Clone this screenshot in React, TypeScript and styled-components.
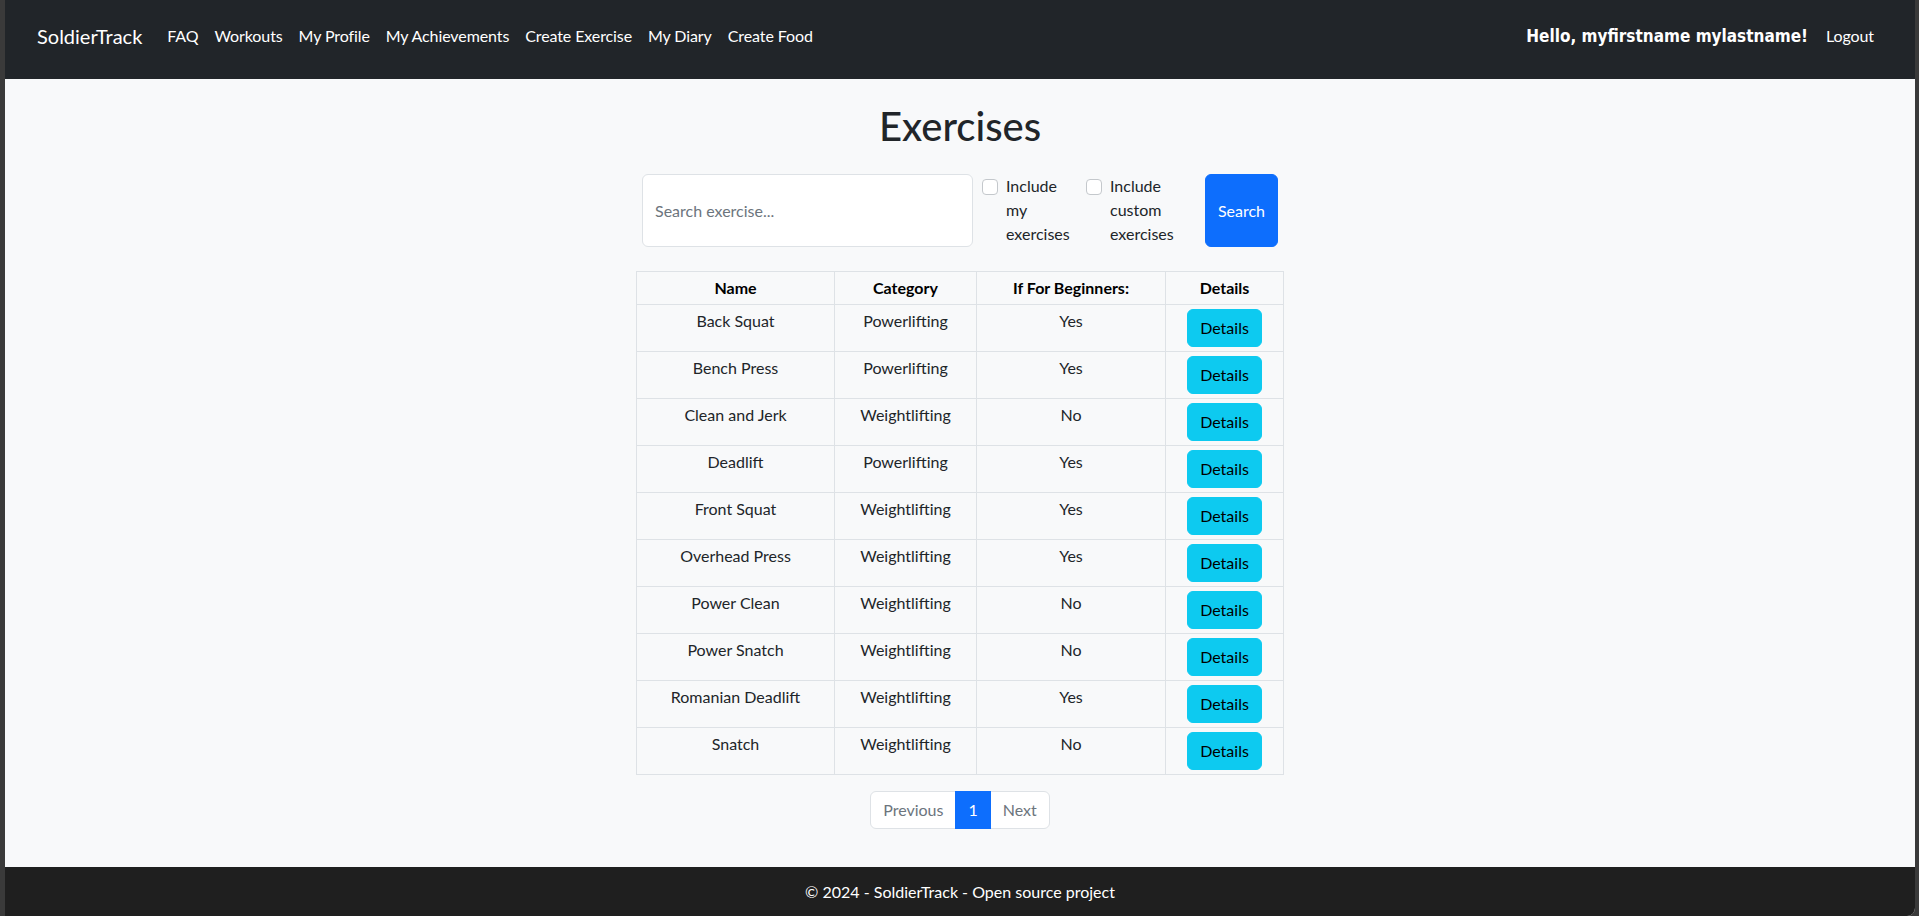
import { FC } from 'react';
import styled, { createGlobalStyle } from 'styled-components';

const GlobalStyle = createGlobalStyle`
  html, body {
    margin: 0;
    padding: 0;
    background: #3a3a3a;
  }
  body {
    font-family: Lato, "Open Sans", sans-serif;
    font-size: 16px;
    line-height: 1.5;
    color: #212529;
  }
  * {
    box-sizing: border-box;
  }
`;

const Window = styled.div`
  margin: 0 4px 0 5px;
  height: 100vh;
  display: flex;
  flex-direction: column;
  background: #f8f9fa;
  border-bottom-right-radius: 8px;
  overflow: hidden;
`;

const NavBar = styled.nav`
  height: 79px;
  flex-shrink: 0;
  background: #212529;
  display: flex;
  align-items: flex-start;
  padding: 20px 33px 0 32px;
`;

const Brand = styled.a`
  font-size: 20px;
  line-height: 32px;
  color: #fff;
  text-decoration: none;
  margin-right: 17px;
`;

const NavList = styled.ul`
  display: flex;
  list-style: none;
  margin: 0;
  padding: 0;
  flex: 1;
`;

const NavLink = styled.a`
  display: block;
  padding: 4px 8px;
  font-size: 16px;
  line-height: 24px;
  letter-spacing: -0.1px;
  color: #fff;
  text-decoration: none;
`;

const Greeting = styled.span`
  font-family: "DejaVu Sans Condensed", "DejaVu Sans", sans-serif;
  font-weight: bold;
  font-size: 17px;
  line-height: 32px;
  color: #fff;
  margin-right: 10px;
`;

const Main = styled.main`
  flex: 1;
  display: flex;
  flex-direction: column;
  align-items: center;
  padding-top: 23px;
`;

const Title = styled.h1`
  margin: 0 0 24px;
  font-size: 40px;
  line-height: 48px;
  font-weight: 500;
  color: #212529;
`;

const SearchForm = styled.form`
  display: flex;
  align-items: flex-start;
  margin-bottom: 24px;
`;

const SearchInput = styled.input`
  width: 331px;
  height: 73px;
  padding: 6px 12px;
  font-family: inherit;
  font-size: 16px;
  color: #212529;
  background: #fff;
  border: 1px solid #dee2e6;
  border-radius: 6px;
  outline: none;

  &::placeholder {
    color: #6c757d;
  }
`;

const CheckItem = styled.label<{ gap: number }>`
  display: flex;
  align-items: flex-start;
  margin-left: 9px;
  margin-right: ${({ gap }) => gap}px;
`;

const CheckBox = styled.input`
  appearance: none;
  width: 16px;
  height: 16px;
  margin: 5px 8px 0 0;
  flex-shrink: 0;
  background: #fff;
  border: 1px solid #c4c8cc;
  border-radius: 4px;
`;

const CheckText = styled.span`
  width: 68px;
  font-size: 16px;
  line-height: 24px;
  color: #212529;
`;

const SearchButton = styled.button`
  width: 73px;
  height: 73px;
  padding: 0;
  font-family: inherit;
  font-size: 16px;
  color: #fff;
  background: #0d6efd;
  border: 1px solid #0d6efd;
  border-radius: 6px;
`;

const Table = styled.table`
  width: 648px;
  border-collapse: collapse;
  margin-bottom: 16px;
`;

const HeadCell = styled.th<{ w: number }>`
  width: ${({ w }) => w}px;
  padding: 4px;
  font-weight: bold;
  line-height: 24px;
  color: #000;
  text-align: center;
  vertical-align: top;
  border: 1px solid #dee2e6;
`;

const Cell = styled.td`
  padding: 4px;
  line-height: 24px;
  text-align: center;
  vertical-align: top;
  border: 1px solid #dee2e6;
`;

const DetailsButton = styled.button`
  height: 38px;
  padding: 6px 12px;
  font-family: inherit;
  font-size: 16px;
  line-height: 24px;
  color: #000;
  background: #0dcaf0;
  border: 1px solid #0dcaf0;
  border-radius: 6px;
`;

const Pagination = styled.ul`
  display: flex;
  list-style: none;
  margin: 0;
  padding: 0;
`;

const PageLink = styled.a<{ active?: boolean; disabled?: boolean; edge?: 'left' | 'right' }>`
  display: block;
  padding: 6px 12px;
  margin-left: ${({ edge }) => (edge === 'left' ? 0 : -1)}px;
  font-size: 16px;
  line-height: 24px;
  text-decoration: none;
  color: ${({ active, disabled }) => (active ? '#fff' : disabled ? '#6c757d' : '#0d6efd')};
  background: ${({ active }) => (active ? '#0d6efd' : '#fff')};
  border: 1px solid ${({ active }) => (active ? '#0d6efd' : '#dee2e6')};
  position: relative;
  z-index: ${({ active }) => (active ? 1 : 0)};
  border-radius: ${({ edge }) => (edge === 'left' ? '6px 0 0 6px' : edge === 'right' ? '0 6px 6px 0' : '0')};
`;

const Footer = styled.footer`
  height: 49px;
  flex-shrink: 0;
  display: flex;
  align-items: center;
  justify-content: center;
  background: #1f1f1f;
  color: #fff;
  font-size: 16px;
`;

type TExercise = {
  name: string,
  category: string,
  beginner: boolean,
};

const exercises: TExercise[] = [
  { name: 'Back Squat', category: 'Powerlifting', beginner: true },
  { name: 'Bench Press', category: 'Powerlifting', beginner: true },
  { name: 'Clean and Jerk', category: 'Weightlifting', beginner: false },
  { name: 'Deadlift', category: 'Powerlifting', beginner: true },
  { name: 'Front Squat', category: 'Weightlifting', beginner: true },
  { name: 'Overhead Press', category: 'Weightlifting', beginner: true },
  { name: 'Power Clean', category: 'Weightlifting', beginner: false },
  { name: 'Power Snatch', category: 'Weightlifting', beginner: false },
  { name: 'Romanian Deadlift', category: 'Weightlifting', beginner: true },
  { name: 'Snatch', category: 'Weightlifting', beginner: false },
];

const navItems = ['FAQ', 'Workouts', 'My Profile', 'My Achievements', 'Create Exercise', 'My Diary', 'Create Food'];

const App: FC = () => (
  <>
    <GlobalStyle />
    <Window>
      <NavBar>
        <Brand href='#'>SoldierTrack</Brand>
        <NavList>
          {navItems.map((item) => (
            <li key={item}><NavLink href='#'>{item}</NavLink></li>
          ))}
        </NavList>
        <Greeting>Hello, myfirstname mylastname!</Greeting>
        <NavLink href='#'>Logout</NavLink>
      </NavBar>
      <Main>
        <Title>Exercises</Title>
        <SearchForm onSubmit={(e) => e.preventDefault()}>
          <SearchInput placeholder='Search exercise...' />
          <CheckItem gap={3}>
            <CheckBox type='checkbox' />
            <CheckText>Include my exercises</CheckText>
          </CheckItem>
          <CheckItem gap={27}>
            <CheckBox type='checkbox' />
            <CheckText>Include custom exercises</CheckText>
          </CheckItem>
          <SearchButton type='submit'>Search</SearchButton>
        </SearchForm>
        <Table>
          <thead>
            <tr>
              <HeadCell w={198}>Name</HeadCell>
              <HeadCell w={142}>Category</HeadCell>
              <HeadCell w={189}>If For Beginners:</HeadCell>
              <HeadCell w={118}>Details</HeadCell>
            </tr>
          </thead>
          <tbody>
            {exercises.map((ex) => (
              <tr key={ex.name}>
                <Cell>{ex.name}</Cell>
                <Cell>{ex.category}</Cell>
                <Cell>{ex.beginner ? 'Yes' : 'No'}</Cell>
                <Cell><DetailsButton>Details</DetailsButton></Cell>
              </tr>
            ))}
          </tbody>
        </Table>
        <Pagination>
          <li><PageLink href='#' disabled edge='left'>Previous</PageLink></li>
          <li><PageLink href='#' active>1</PageLink></li>
          <li><PageLink href='#' disabled edge='right'>Next</PageLink></li>
        </Pagination>
      </Main>
      <Footer>© 2024 - SoldierTrack - Open source project</Footer>
    </Window>
  </>
);

export default App;
